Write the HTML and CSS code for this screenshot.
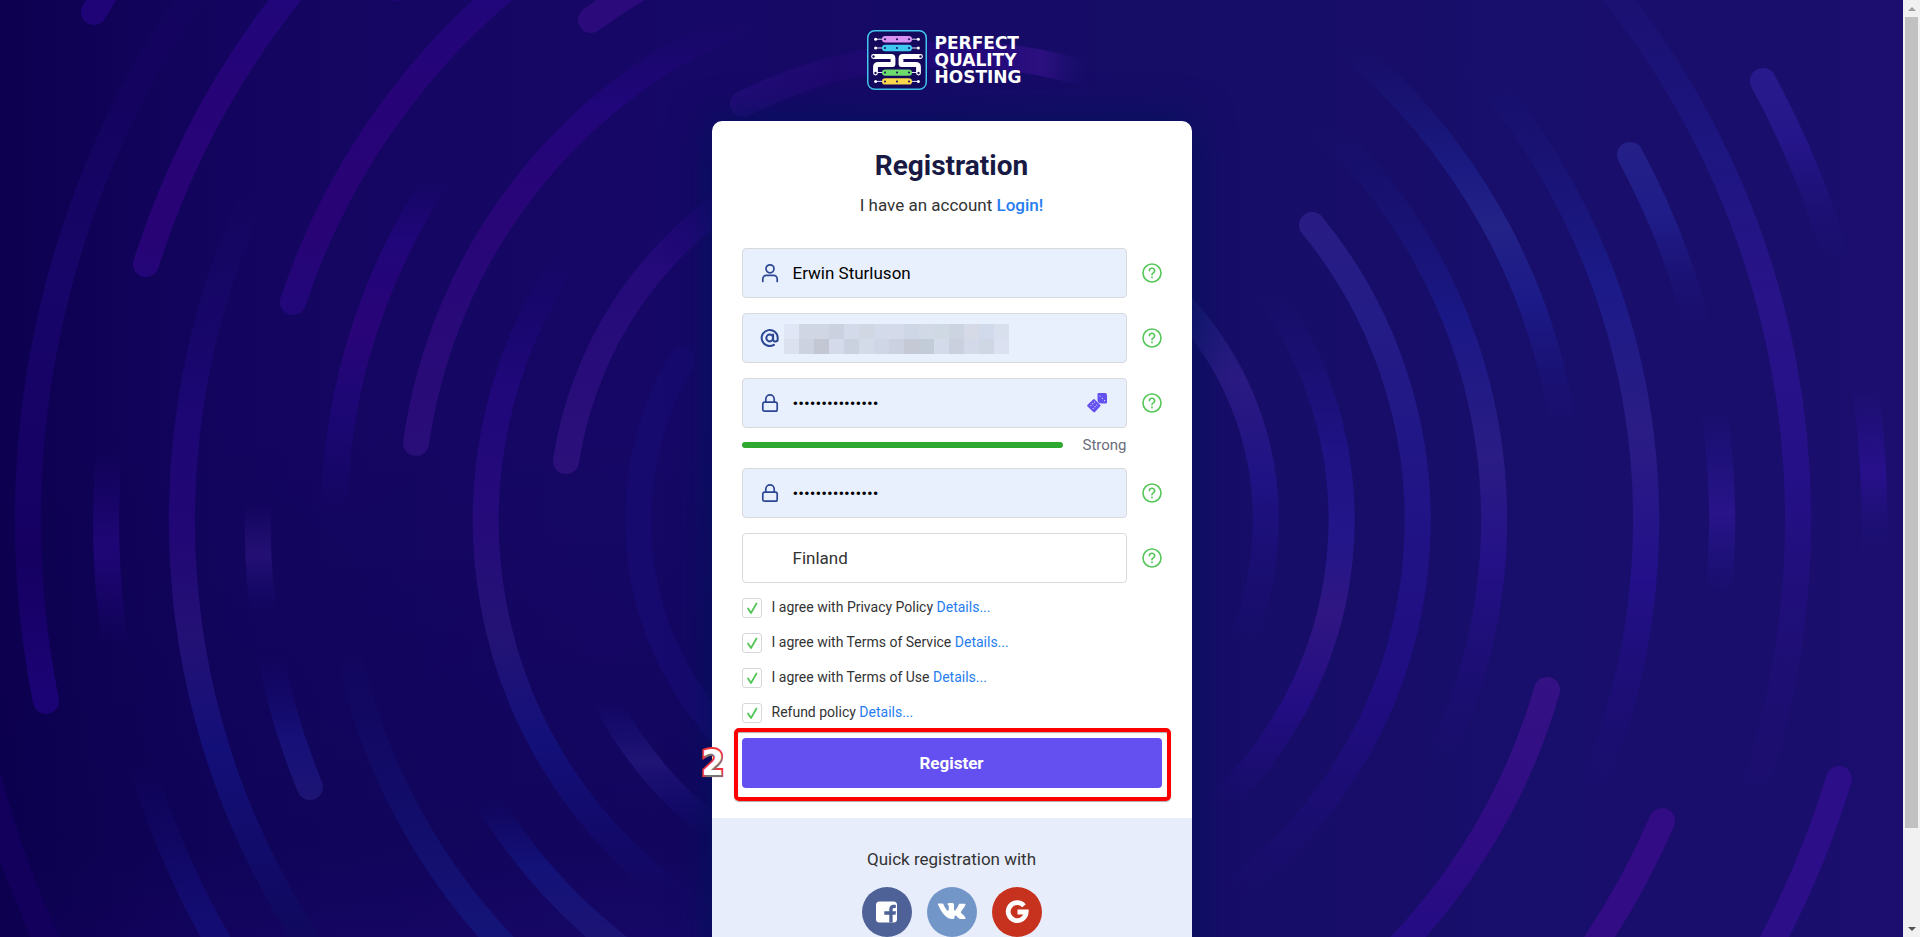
FILE: index.html
```html
<!DOCTYPE html>
<html lang="en">
<head>
<meta charset="utf-8">
<title>Registration</title>
<link rel="stylesheet" href="styles.css">
</head>
<body>
<svg class="defs" aria-hidden="true">
  <defs>
    <symbol id="help" viewBox="0 0 20 20"><circle cx="10" cy="10" r="9"/><path d="M7.400 7.800a2.600 2.500 0 1 1 3.900 2.100c-.9.500-1.300.8-1.300 1.600v.3M10 14v.7"/></symbol>
    <symbol id="lock" viewBox="0 0 20 20"><rect x="2.800" y="9.200" width="14.400" height="9" rx="1.800"/><path d="M5.800 9V6a4.200 4.200 0 0 1 8.400 0v3"/></symbol>
  </defs>
</svg>
<div class="window">
<main class="page">
  <svg class="backdrop" viewBox="0 0 1903 937" preserveAspectRatio="xMidYMin slice" aria-hidden="true">
    <defs>
      <linearGradient id="a" gradientUnits="userSpaceOnUse" x1="0" y1="0" x2="0" y2="937"><stop offset="0" stop-color="#150462" stop-opacity=".4"/><stop offset=".3" stop-color="#180569"/><stop offset=".6" stop-color="#150062"/><stop offset=".74" stop-color="#1c0375"/></linearGradient>
      <linearGradient id="c" gradientUnits="userSpaceOnUse" x1="0" y1="0" x2="0" y2="300"><stop offset="0" stop-color="#20067a"/><stop offset=".3" stop-color="#260478"/><stop offset=".75" stop-color="#280375"/><stop offset="1" stop-color="#22077a"/></linearGradient>
      <linearGradient id="e" gradientUnits="userSpaceOnUse" x1="0" y1="20" x2="0" y2="450"><stop offset="0" stop-color="#20067a" stop-opacity="0"/><stop offset=".2" stop-color="#20067a"/><stop offset=".4" stop-color="#280578"/><stop offset="1" stop-color="#290d78"/></linearGradient>
      <linearGradient id="f" gradientUnits="userSpaceOnUse" x1="0" y1="180" x2="0" y2="470"><stop offset="0" stop-color="#20077a" stop-opacity=".3"/><stop offset=".3" stop-color="#240a7a"/><stop offset="1" stop-color="#2b107a"/></linearGradient>
      <linearGradient id="i" gradientUnits="userSpaceOnUse" x1="0" y1="190" x2="0" y2="937"><stop offset="0" stop-color="#19086c" stop-opacity="0"/><stop offset=".3" stop-color="#1c0774"/><stop offset=".45" stop-color="#210675"/><stop offset=".6" stop-color="#231175"/><stop offset=".75" stop-color="#130f78"/><stop offset="1" stop-color="#10095e"/></linearGradient>
      <linearGradient id="j" gradientUnits="userSpaceOnUse" x1="0" y1="450" x2="0" y2="937"><stop offset="0" stop-color="#1f0676" stop-opacity="0"/><stop offset=".2" stop-color="#1f0676"/><stop offset=".4" stop-color="#1f0676" stop-opacity="0"/><stop offset=".65" stop-color="#130d74" stop-opacity="0"/><stop offset="1" stop-color="#130d74"/></linearGradient>
      <linearGradient id="k" gradientUnits="userSpaceOnUse" x1="0" y1="505" x2="0" y2="800"><stop offset="0" stop-color="#241074" stop-opacity="0"/><stop offset=".17" stop-color="#241074"/><stop offset=".37" stop-color="#150a70" stop-opacity="0"/><stop offset=".5" stop-color="#150a70" stop-opacity="0"/><stop offset=".8" stop-color="#161078"/><stop offset="1" stop-color="#1d1474"/></linearGradient>
      <linearGradient id="l" gradientUnits="userSpaceOnUse" x1="0" y1="180" x2="0" y2="937"><stop offset="0" stop-color="#20067a" stop-opacity="0"/><stop offset=".08" stop-color="#20067a"/><stop offset=".2" stop-color="#290478"/><stop offset=".3" stop-color="#1c0775"/><stop offset=".44" stop-color="#1c0775" stop-opacity="0"/><stop offset=".6" stop-color="#12116f" stop-opacity="0"/><stop offset="1" stop-color="#141478"/></linearGradient>
      <linearGradient id="m" gradientUnits="userSpaceOnUse" x1="0" y1="800" x2="0" y2="937"><stop offset="0" stop-color="#121078" stop-opacity="0"/><stop offset=".5" stop-color="#131278"/><stop offset="1" stop-color="#1c1475"/></linearGradient>
      <linearGradient id="n" gradientUnits="userSpaceOnUse" x1="0" y1="260" x2="0" y2="900"><stop offset="0" stop-color="#1b087a" stop-opacity="0"/><stop offset=".2" stop-color="#20077a"/><stop offset=".42" stop-color="#250b7a"/><stop offset=".58" stop-color="#241375"/><stop offset=".75" stop-color="#13107a"/><stop offset="1" stop-color="#13107a" stop-opacity="0"/></linearGradient>
      <linearGradient id="o" gradientUnits="userSpaceOnUse" x1="0" y1="700" x2="0" y2="835"><stop offset="0" stop-color="#141078" stop-opacity="0"/><stop offset=".45" stop-color="#201475"/><stop offset="1" stop-color="#120f78" stop-opacity="0"/></linearGradient>
      <linearGradient id="r1" gradientUnits="userSpaceOnUse" x1="0" y1="310" x2="0" y2="650"><stop offset="0" stop-color="#1c1a76"/><stop offset=".2" stop-color="#2a1a82"/><stop offset=".5" stop-color="#1f1284"/><stop offset="1" stop-color="#1c0d78" stop-opacity="0"/></linearGradient>
      <linearGradient id="r2" gradientUnits="userSpaceOnUse" x1="0" y1="290" x2="0" y2="810"><stop offset="0" stop-color="#1a1278" stop-opacity="0"/><stop offset=".3" stop-color="#1e1284"/><stop offset=".48" stop-color="#22168a"/><stop offset=".62" stop-color="#301682"/><stop offset=".8" stop-color="#230d84"/><stop offset="1" stop-color="#1e0c78" stop-opacity="0"/></linearGradient>
      <linearGradient id="r3" gradientUnits="userSpaceOnUse" x1="0" y1="210" x2="0" y2="900"><stop offset="0" stop-color="#291c84"/><stop offset=".15" stop-color="#241c86"/><stop offset=".45" stop-color="#201386"/><stop offset=".7" stop-color="#200d82"/><stop offset="1" stop-color="#1e0c78" stop-opacity="0"/></linearGradient>
      <linearGradient id="r4" gradientUnits="userSpaceOnUse" x1="0" y1="130" x2="0" y2="760"><stop offset="0" stop-color="#181676" stop-opacity="0"/><stop offset=".3" stop-color="#1a1886"/><stop offset=".52" stop-color="#2a1c84"/><stop offset=".68" stop-color="#241188"/><stop offset="1" stop-color="#1e0c78" stop-opacity="0"/></linearGradient>
      <linearGradient id="r5" gradientUnits="userSpaceOnUse" x1="0" y1="50" x2="0" y2="440"><stop offset="0" stop-color="#191878" stop-opacity="0"/><stop offset=".3" stop-color="#1a1a82"/><stop offset=".45" stop-color="#222287"/><stop offset=".65" stop-color="#1c1a88"/><stop offset="1" stop-color="#1a1276" stop-opacity="0"/></linearGradient>
      <linearGradient id="r6" gradientUnits="userSpaceOnUse" x1="0" y1="60" x2="0" y2="800"><stop offset="0" stop-color="#191878" stop-opacity="0"/><stop offset=".3" stop-color="#1b1a88"/><stop offset=".5" stop-color="#2a1c84"/><stop offset=".7" stop-color="#23108a"/><stop offset="1" stop-color="#1e0c78" stop-opacity="0"/></linearGradient>
      <linearGradient id="r7" gradientUnits="userSpaceOnUse" x1="0" y1="140" x2="0" y2="590"><stop offset="0" stop-color="#252088"/><stop offset=".18" stop-color="#1f1c88"/><stop offset=".42" stop-color="#1c1276" stop-opacity="0"/><stop offset=".6" stop-color="#20148a" stop-opacity="0"/><stop offset=".83" stop-color="#291489"/><stop offset="1" stop-color="#20148a" stop-opacity="0"/></linearGradient>
      <linearGradient id="r8" gradientUnits="userSpaceOnUse" x1="0" y1="-20" x2="0" y2="800"><stop offset="0" stop-color="#1c1276" stop-opacity=".5"/><stop offset=".2" stop-color="#1d1680"/><stop offset=".4" stop-color="#291389"/><stop offset=".6" stop-color="#251088"/><stop offset="1" stop-color="#200e78" stop-opacity="0"/></linearGradient>
      <linearGradient id="r9" gradientUnits="userSpaceOnUse" x1="0" y1="70" x2="0" y2="560"><stop offset="0" stop-color="#281a8c"/><stop offset=".15" stop-color="#25158a"/><stop offset=".38" stop-color="#1c1276" stop-opacity="0"/><stop offset=".64" stop-color="#26108a" stop-opacity="0"/><stop offset=".82" stop-color="#28108c"/><stop offset="1" stop-color="#1c1276" stop-opacity="0"/></linearGradient>
      <linearGradient id="g" gradientUnits="userSpaceOnUse" x1="730" y1="0" x2="1085" y2="0"><stop offset="0" stop-color="#220c77"/><stop offset=".3" stop-color="#1d096e"/><stop offset=".7" stop-color="#22087a"/><stop offset=".88" stop-color="#2c1080"/><stop offset="1" stop-color="#22107a" stop-opacity="0"/></linearGradient>
      <linearGradient id="s" gradientUnits="userSpaceOnUse" x1="0" y1="670" x2="0" y2="937"><stop offset="0" stop-color="#341284"/><stop offset=".6" stop-color="#300c84"/><stop offset="1" stop-color="#240c84"/></linearGradient>
    </defs>
    <g class="arcs">
      <path stroke="url(#a)" d="M46 701A922 922 0 0 1 218-40"/>
      <path stroke="#1f0478" d="M94 12A998 998 0 0 1 140-60"/>
      <path stroke="url(#c)" d="M146 264A846 846 0 0 1 318-40"/>
      <path stroke="url(#c)" d="M293 302A694 694 0 0 1 542-40"/>
      <path stroke="url(#e)" d="M416 443A542 542 0 0 1 760 13"/>
      <path stroke="url(#f)" d="M566 461A390 390 0 0 1 829 150"/>
      <path stroke="#2b0a7c" d="M591 20A618 618 0 0 1 687-38"/>
      <path stroke="#22067a" d="M395-12A770 770 0 0 1 440-56"/>
      <path stroke="url(#i)" d="M266 170A770 770 0 0 0 320 960"/>
      <path stroke="url(#j)" d="M110 440A846 846 0 0 0 229 960"/>
      <path stroke="url(#k)" d="M258 500A694 694 0 0 0 310 787"/>
      <path stroke="url(#l)" d="M443 170A618 618 0 0 0 518 960"/>
      <path stroke="url(#m)" d="M482 790A542 542 0 0 0 636 960"/>
      <path stroke="url(#n)" d="M565 260A466 466 0 0 0 682 900"/>
      <path stroke="url(#o)" d="M601 690A390 390 0 0 0 744 850"/>
      <path stroke="#170a6e" d="M682 360A314 314 0 0 0 728 740"/>
      <path stroke="#13005d" d="M-11 780A998 998 0 0 0 56 960"/>
      <path stroke="url(#g)" d="M743 104A466 466 0 0 1 1090 75"/>
      <path stroke="url(#r1)" d="M1072 230A314 314 0 0 1 1233 660"/>
      <path stroke="url(#r2)" d="M1251 270A390 390 0 0 1 1223 800"/>
      <path stroke="url(#r3)" d="M1312 225A466 466 0 0 1 1222 900"/>
      <path stroke="url(#r4)" d="M1318 120A542 542 0 0 1 1433 770"/>
      <path stroke="url(#r5)" d="M1341 40A618 618 0 0 1 1565 440"/>
      <path stroke="url(#r6)" d="M1463 50A694 694 0 0 1 1587 800"/>
      <path stroke="url(#r7)" d="M1630 155A770 770 0 0 1 1719 590"/>
      <path stroke="url(#r8)" d="M1603-20A846 846 0 0 1 1754 790"/>
      <path stroke="url(#r9)" d="M1763 81A922 922 0 0 1 1874 550"/>
      <path stroke="url(#s)" d="M1547 690A618 618 0 0 1 1386 960"/>
      <path stroke="#320c84" d="M1662 821A770 770 0 0 1 1584 960"/>
      <path stroke="#2b0e88" d="M1839 779A922 922 0 0 1 1762 960"/>
    </g>
  </svg>

  <header class="brand">
    <svg class="brand-mark" viewBox="0 0 60 60" aria-hidden="true">
      <rect x=".75" y=".75" width="58.500" height="58.500" rx="7" fill="#14095c" stroke="#41c8ee" stroke-width="1.500"/>
      <g stroke="#dfe0ff" stroke-width="1"><path d="M9 9.200H51M9 18H51M9 42.500H51M9 51.400H51"/></g>
      <g fill="#fff"><circle cx="8.600" cy="9.200" r="1.500"/><circle cx="51.400" cy="9.200" r="1.500"/><circle cx="8.600" cy="18" r="1.500"/><circle cx="51.400" cy="18" r="1.500"/><circle cx="8.600" cy="51.400" r="1.500"/><circle cx="51.400" cy="51.400" r="1.500"/></g>
      <rect x="15" y="6" width="30" height="6.400" rx="3.200" fill="#d893f2"/><rect x="15" y="14.800" width="30" height="6.400" rx="3.200" fill="#3fc9ef"/>
      <rect x="15" y="39.400" width="30" height="6.400" rx="3.200" fill="#6edb6e"/><rect x="15" y="48.200" width="30" height="6.400" rx="3.200" fill="#ffdc4a"/>
      <g fill="none" stroke="#fff" stroke-width="4.800" stroke-linejoin="round" stroke-linecap="round"><path d="M6.500 26.500H24Q26 26.500 26 28.500V34.500H11.500Q8.500 34.500 8.500 37V43"/><path d="M53.500 26.500H36Q34 26.500 34 28.500V34.500H48.500Q51.500 34.500 51.500 37V43"/></g>
      <g fill="#14095c"><circle cx="6.500" cy="26.500" r="1.200"/><circle cx="53.500" cy="26.500" r="1.200"/><circle cx="8.500" cy="43" r="1.200"/><circle cx="51.500" cy="43" r="1.200"/><circle cx="18" cy="9.200" r="1"/><circle cx="30" cy="9.200" r="1"/><circle cx="42" cy="9.200" r="1"/><circle cx="18" cy="18" r="1"/><circle cx="30" cy="18" r="1"/><circle cx="42" cy="18" r="1"/><circle cx="18" cy="42.600" r="1"/><circle cx="30" cy="42.600" r="1"/><circle cx="42" cy="42.600" r="1"/><circle cx="18" cy="51.400" r="1"/><circle cx="30" cy="51.400" r="1"/><circle cx="42" cy="51.400" r="1"/></g>
    </svg>
    <div class="brand-name">PERFECT<br>QUALITY<br>HOSTING</div>
  </header>

  <section class="card">
    <form class="form">
      <h1 class="title">Registration</h1>
      <p class="login">I have an account <a href="#login">Login!</a></p>

      <div class="row">
        <div class="field">
          <svg class="icon" viewBox="0 0 20 20" aria-hidden="true"><circle cx="10" cy="5.800" r="4"/><path d="M2.800 18.500V16a3.600 3.600 0 0 1 3.600-3.600h7.200a3.600 3.600 0 0 1 3.600 3.600v2.500"/></svg>
          <input class="input" type="text" aria-label="Name" value="Erwin Sturluson">
        </div>
        <button class="help" type="button" aria-label="Help: name"><svg><use href="#help"/></svg></button>
      </div>

      <div class="row">
        <div class="field">
          <svg class="icon icon-at" viewBox="0 0 20 20" aria-hidden="true"><circle cx="9.700" cy="10" r="3.400"/><path d="M13.100 6.400V11.300a2.300 2.300 0 0 0 4.600 0V10a8 8 0 1 0-3.800 6.800"/></svg>
          <input class="input" type="email" aria-label="Email">
          <svg class="mosaic" viewBox="0 0 15 2" shape-rendering="crispEdges" aria-hidden="true"><path fill="#e0e6f5" d="M0 0h1v1H0z"/><path fill="#d0d6e4" d="M1 0h2v1H1z"/><path fill="#cbd1de" d="M3 0h1v1H3z"/><path fill="#d3daea" d="M4 0h1v1H4zM6 0h1v1H6z"/><path fill="#d1d8e4" d="M5 0h1v1H5z"/><path fill="#d4daea" d="M7 0h1v1H7z"/><path fill="#cdd7e6" d="M8 0h1v1H8z"/><path fill="#d0d9e5" d="M9 0h1v1H9z"/><path fill="#cfd9e4" d="M10 0h2v1h-2z"/><path fill="#cdd4e1" d="M11 0h1v1h-1z"/><path fill="#d6d9e6" d="M12 0h1v1h-1z"/><path fill="#d1daeb" d="M13 0h1v1h-1z"/><path fill="#d7e0ec" d="M14 0h1v1h-1z"/><path fill="#dbe1ee" d="M0 1h1v1H0z"/><path fill="#ccd2e0" d="M1 1h1v1H1z"/><path fill="#c2c7d3" d="M2 1h1v1H2z"/><path fill="#d4dae9" d="M3 1h1v1H3z"/><path fill="#cbd2df" d="M4 1h1v1H4z"/><path fill="#d4dbe8" d="M5 1h1v1H5z"/><path fill="#cfd6e5" d="M6 1h1v1H6z"/><path fill="#cbd1e0" d="M7 1h1v1H7z"/><path fill="#c4c9d5" d="M8 1h1v1H8z"/><path fill="#c2ccd8" d="M9 1h1v1H9z"/><path fill="#d3dae9" d="M10 1h1v1h-1z"/><path fill="#cbd0df" d="M11 1h1v1h-1z"/><path fill="#d3d9e8" d="M12 1h1v1h-1z"/><path fill="#cfd6e4" d="M13 1h1v1h-1z"/><path fill="#dbe1f0" d="M14 1h1v1h-1z"/></svg>
        </div>
        <button class="help" type="button" aria-label="Help: email"><svg><use href="#help"/></svg></button>
      </div>

      <div class="row">
        <div class="field">
          <svg class="icon" aria-hidden="true"><use href="#lock"/></svg>
          <input class="input" type="password" aria-label="Password" value="123456789012345">
          <button class="dice" type="button" aria-label="Generate password"><svg viewBox="0 0 20 20"><path fill="#6450ef" d="M11.500 0H18a2 2 0 0 1 2 2v7.500a1 1 0 0 1-1 1h-4.500a4 4 0 0 1-4-4V1a1 1 0 0 1 1-1zM7.800 6.500l5.300 5.200a1.200 1.200 0 0 1 0 1.700L8 19a1.200 1.200 0 0 1-1.700 0L.600 13.500a1.200 1.200 0 0 1 0-1.700l5.500-5.300a1.200 1.200 0 0 1 1.700 0z"/><g fill="#e8f0fe"><circle cx="13" cy="3" r=".6"/><circle cx="15.300" cy="5.300" r=".6"/><circle cx="17.600" cy="7.600" r=".6"/><circle cx="4" cy="12.500" r=".6"/><circle cx="5.800" cy="10.700" r=".6"/><circle cx="7.600" cy="9" r=".6"/><circle cx="6.200" cy="15.500" r=".6"/><circle cx="8" cy="13.700" r=".6"/><circle cx="9.800" cy="12" r=".6"/></g></svg></button>
        </div>
        <button class="help" type="button" aria-label="Help: password"><svg><use href="#help"/></svg></button>
      </div>

      <div class="strength"><span class="strength-bar"></span><span>Strong</span></div>

      <div class="row">
        <div class="field">
          <svg class="icon" aria-hidden="true"><use href="#lock"/></svg>
          <input class="input" type="password" aria-label="Repeat password" value="123456789012345">
        </div>
        <button class="help" type="button" aria-label="Help: repeat password"><svg><use href="#help"/></svg></button>
      </div>

      <div class="row">
        <div class="field field-plain">
          <select class="input select" aria-label="Country"><option>Finland</option></select>
        </div>
        <button class="help" type="button" aria-label="Help: country"><svg><use href="#help"/></svg></button>
      </div>

      <div class="agree"><input type="checkbox" id="privacy" checked><label for="privacy">I agree with Privacy Policy <a href="#privacy">Details...</a></label></div>
      <div class="agree"><input type="checkbox" id="service" checked><label for="service">I agree with Terms of Service <a href="#service">Details...</a></label></div>
      <div class="agree"><input type="checkbox" id="use" checked><label for="use">I agree with Terms of Use <a href="#use">Details...</a></label></div>
      <div class="agree"><input type="checkbox" id="refund" checked><label for="refund">Refund policy <a href="#refund">Details...</a></label></div>

      <div class="submit">
        <button class="register" type="submit">Register</button>
        <span class="highlight"></span>
        <span class="step">2</span>
      </div>
    </form>

    <div class="quick">
      <p class="quick-title">Quick registration with</p>
      <div class="social">
        <a class="fb" href="#facebook" aria-label="Facebook"><svg viewBox="0 0 50 50"><rect x="14" y="14.500" width="21" height="21" rx="3.500" fill="#fff"/><path fill="#4e6297" d="M27.300 35.500v-7.800h-5v-3.400h5v-2.100c0-3 1.700-4.500 4.300-4.500h2.200v3.200h-1.500c-1.300 0-1.700.6-1.700 1.600v1.800h3.400l-.5 3.400h-2.900v7.800z"/></svg></a>
        <a class="vk" href="#vk" aria-label="VK"><svg viewBox="0 0 50 50"><path fill="#fff" d="M24.800 32h1.600s.5-.1.700-.3c.2-.3.200-.7.200-.7s0-2.300 1-2.600c1-.3 2.300 2.200 3.700 3.100 1 .7 1.800.6 1.800.6h3.500s1.900-.1 1-1.700c-.1-.1-.5-1.100-2.800-3.200-2.400-2.200-2-1.900.8-5.700 1.700-2.300 2.400-3.700 2.200-4.300-.2-.5-1.600-.4-1.600-.4h-4c-.5 0-.9.100-1.100.6 0 0-.6 1.700-1.500 3.100-1.800 3-2.500 3.200-2.800 3-.7-.4-.5-1.800-.5-2.700 0-2.900.4-4.200-.9-4.500-.4-.1-.8-.2-1.900-.2-1.400 0-2.700 0-3.400.4-.5.200-.8.700-.6.800.3 0 .9.200 1.200.6.400.6.400 1.800.4 1.800s.3 3.500-.6 4c-.6.300-1.400-.3-3.200-3.300-.9-1.500-1.600-3.200-1.600-3.200s-.2-.6-1-.7h-3.700c-.7 0-1 .4-.7.9 0 0 2.900 6.900 6.300 10.400C20.400 32.200 24.800 32 24.800 32z"/></svg></a>
        <a class="gg" href="#google" aria-label="Google"><svg viewBox="0 0 50 50"><path fill="none" stroke="#fff" stroke-width="4.800" d="M32 18.700a9 9 0 1 0 2.200 6.300H25.500"/></svg></a>
      </div>
    </div>
  </section>
</main>
<div class="scrollbar" aria-hidden="true"><span class="arrow arrow-up"></span><span class="thumb"></span><span class="arrow arrow-down"></span></div>
</div>
</body>
</html>
```
FILE: styles.css
```css
* { box-sizing: border-box; }
body { margin: 0; font-family: Roboto, "Liberation Sans", sans-serif; font-size: 17px; color: #333; }
a { color: #267df0; text-decoration: none; }
p, h1 { margin: 0; }
button { padding: 0; border: 0; background: none; font: inherit; cursor: pointer; }
svg { display: block; }
.defs { position: absolute; width: 0; height: 0; }

.window { display: flex; height: 100vh; overflow: hidden; }
.page {
  position: relative; flex: 1; overflow: hidden;
  display: flex; flex-direction: column; align-items: center; padding-top: 30px;
  background: linear-gradient(to bottom, transparent 45%, rgba(5, 0, 70, .25) 90%, rgba(5, 0, 70, 0) 100%) left / 48% 100% no-repeat,
    linear-gradient(to right, #0d0050 0%, #13055f 12%, #160766 32%, #160d67 60%, #180e6b 80%, #1b0e6e 100%);
}
.backdrop { position: absolute; inset: 0; width: 100%; height: 100%; }
.arcs { fill: none; stroke-width: 26px; stroke-linecap: round; }

.brand { position: relative; display: flex; align-items: center; gap: 8px; }
.brand-mark { width: 60px; height: 60px; }
.brand-name { width: 102px; color: #fff; font: bold 17px/17px "DejaVu Sans", sans-serif; }

.card {
  position: relative; width: 480px; margin-top: 31px; flex: none;
  background: #fff; border-radius: 10px 10px 0 0; box-shadow: 0 0 40px #00125c;
}
.form { display: flex; flex-direction: column; gap: 15px; padding: 28px 30px 30px; }
.title { text-align: center; font-size: 28px; line-height: 34px; font-weight: 700; color: #181a44; }
.login { margin: -4px 0 17px; text-align: center; line-height: 22px; }
.login a { font-weight: 500; }

.row { display: flex; align-items: center; gap: 15px; }
.field {
  position: relative; flex: 1; display: flex; align-items: center; height: 50px;
  border: 1px solid #d9dade; border-radius: 4px; background: #e8f0fe; overflow: hidden;
}
.field-plain { background: #fff; }
.icon { position: absolute; left: 17px; width: 20px; height: 20px; fill: none; stroke: #2b4793; stroke-width: 1.7; stroke-linecap: round; stroke-linejoin: round; pointer-events: none; }
.icon-at { stroke-width: 2; }
.input { width: 100%; height: 48px; padding: 0 50px; border: 0; outline: 0; background: none; color: #000; font: 17px Roboto, sans-serif; }
.select { appearance: none; color: #333; }
.mosaic { position: absolute; left: 41px; top: 10px; width: 225px; height: 30px; }
.dice { position: absolute; right: 19px; width: 20px; height: 20px; }
.help svg { width: 20px; height: 20px; fill: none; stroke: #55c658; stroke-width: 1.6; stroke-linecap: round; }

.strength { display: flex; align-items: center; justify-content: space-between; width: 385px; height: 20px; margin: -8px 0 -2px; font-size: 15px; color: #6b6d7c; }
.strength-bar { width: 321px; height: 6px; border-radius: 3px; background: #2fa82f; }

.agree { display: flex; gap: 10px; height: 20px; font-size: 14px; line-height: 18px; }
.agree input {
  appearance: none; width: 20px; height: 20px; margin: 0; border: 1px solid #d6d7dc; border-radius: 3px;
  background: #fff url("data:image/svg+xml,%3Csvg xmlns='http://www.w3.org/2000/svg' viewBox='0 0 18 18'%3E%3Cpath d='M5 9.500l3 4.500 5.500-9.500' fill='none' stroke='%2355c658' stroke-width='1.800' stroke-linecap='round' stroke-linejoin='round'/%3E%3C/svg%3E") center / 18px no-repeat;
}

.submit { position: relative; }
.register { display: block; width: 100%; height: 50px; border-radius: 4px; background: #6450f0; color: #fff; font-weight: 700; }
.highlight { position: absolute; inset: -10px -9px -13px -8px; border: 4px solid #f00; border-radius: 5px; box-shadow: 0 1px 1px #6668, inset 0 1px 1px #6668; pointer-events: none; }
.step {
  position: absolute; left: -40px; top: 5px; width: 22px; text-align: center;
  font: bold 36px/40px "Liberation Sans Narrow", "DejaVu Sans Condensed", Roboto, sans-serif; color: #fff; -webkit-text-stroke: 4px #f0333a; paint-order: stroke fill;
  text-shadow: 1px 2px 1px #777;
}

.quick { display: flex; flex-direction: column; align-items: center; gap: 17px; padding: 30px 30px 40px; background: #e8edfb; }
.quick-title { line-height: 22px; }
.social { display: flex; gap: 15px; }
.social a { width: 50px; height: 50px; border-radius: 50%; }
.fb { background: #4e6297; }
.vk { background: #7396c8; }
.gg { background: #c6321e; }

.scrollbar { display: flex; flex-direction: column; align-items: center; width: 17px; background: #f1f1f1; }
.thumb { flex: 811; width: 13px; background: #c1c1c1; }
.scrollbar::after { content: ""; order: 1; flex: 92; }
.arrow { display: flex; align-items: center; justify-content: center; height: 17px; }
.arrow::after { content: ""; border: 4px solid transparent; }
.arrow-up::after { border-top: 0; border-bottom-color: #a0a0a0; }
.arrow-down { order: 2; }
.arrow-down::after { border-bottom: 0; border-top-color: #505050; }
```
